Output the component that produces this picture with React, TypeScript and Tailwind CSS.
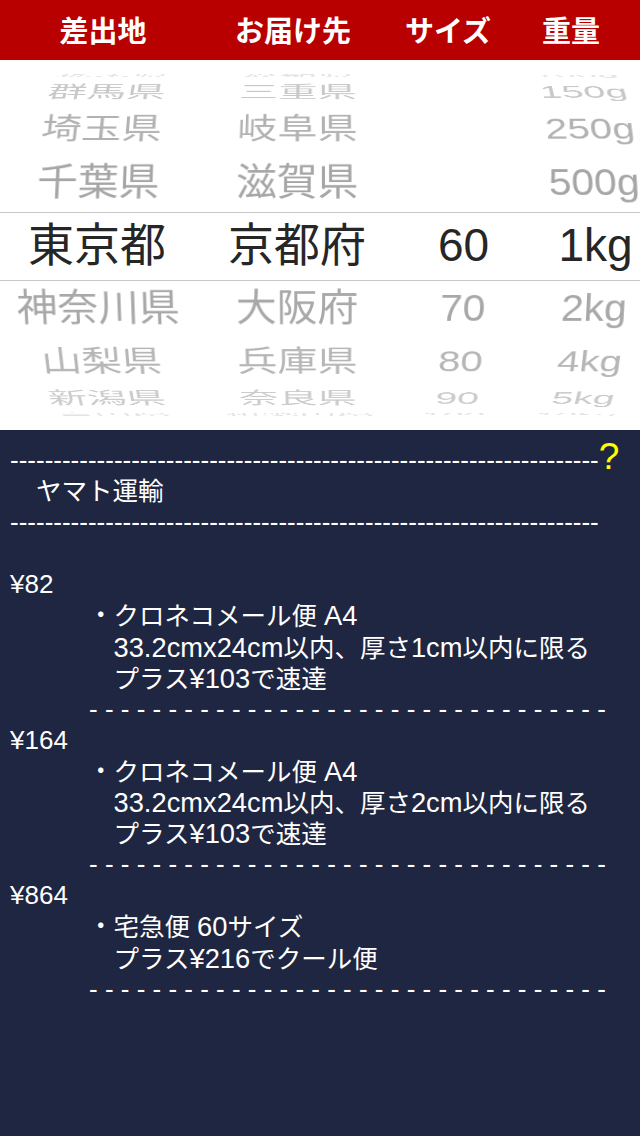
const origins = ['栃木県', '群馬県', '埼玉県', '千葉県', '東京都', '神奈川県', '山梨県', '新潟県', '富山県'];
const dests = ['愛知県', '三重県', '岐阜県', '滋賀県', '京都府', '大阪府', '兵庫県', '奈良県', '和歌山県'];
const sizes = ['', '', '', '', '60', '70', '80', '90', '100'];
const weights = ['100g', '150g', '250g', '500g', '1kg', '2kg', '4kg', '5kg', '10kg'];

// one entry per visible wheel row, from top to bottom (20deg per step)
const rowStyles = [
  'rotate-x-[80deg] text-[#e4e4e4] text-[41px]',
  'rotate-x-[60deg] text-[#c8c8c8] text-[41px]',
  'rotate-x-[40deg] text-[#b2b2b2] text-[41px]',
  'rotate-x-[20deg] text-[#a6a6a6] text-[41px]',
  'text-[#262626] text-[46px]',
  'rotate-x-[-20deg] text-[#a8a8a8] text-[41px]',
  'rotate-x-[-40deg] text-[#b6b6b6] text-[41px]',
  'rotate-x-[-60deg] text-[#cccccc] text-[41px]',
  'rotate-x-[-80deg] text-[#e4e4e4] text-[41px]',
];

const dashes = '-'.repeat(68);
const spacedDashes = '- '.repeat(32) + '-';

const quotes = [
  {
    price: '¥82',
    lines: ['クロネコメール便 A4', '33.2cmx24cm以内、厚さ1cm以内に限る', 'プラス¥103で速達'],
  },
  {
    price: '¥164',
    lines: ['クロネコメール便 A4', '33.2cmx24cm以内、厚さ2cm以内に限る', 'プラス¥103で速達'],
  },
  {
    price: '¥864',
    lines: ['宅急便 60サイズ', 'プラス¥216でクール便'],
  },
];

// latin runs are set a touch larger than the kana/kanji, like the original font
function Mixed({ text }: { text: string }) {
  const parts = text.split(/([0-9A-Za-z.¥]+)/);
  return (
    <>
      {parts.map((p, i) =>
        /^[0-9A-Za-z.¥]+$/.test(p) ? (
          <span key={i} className="text-[27.3px]">
            {p}
          </span>
        ) : (
          <span key={i}>{p}</span>
        )
      )}
    </>
  );
}

function Header() {
  return (
    <div className="h-[60px] shrink-0 bg-[#b90000] grid grid-cols-[206px_174px_136px_110px] items-center text-white text-[29px] font-bold [font-family:'Noto_Sans_CJK_JP',sans-serif]">
      <div className="text-center">差出地</div>
      <div className="text-center">お届け先</div>
      <div className="text-center">サイズ</div>
      <div className="text-center">重量</div>
    </div>
  );
}

function Picker() {
  return (
    <div className="h-[370px] shrink-0 bg-white overflow-hidden grid grid-rows-1 items-center perspective-[2000px] [font-family:'Liberation_Sans','Noto_Sans_CJK_JP',sans-serif]">
      {/* selection lines */}
      <div className="col-start-1 row-start-1 h-[69px] mt-[2px] w-full border-y border-[#c8c8c8]" />
      {rowStyles.map((cls, i) => (
        <div
          key={i}
          className={`col-start-1 row-start-1 h-[56px] leading-[56px] w-full grid grid-cols-[194px_206px_127px_1fr] items-center origin-[50%_50%_-185px] whitespace-nowrap ${cls}`}
        >
          <div className="text-center">{origins[i]}</div>
          <div className="text-center">{dests[i]}</div>
          <div className="text-center">{sizes[i]}</div>
          <div className="text-center pl-[23px]">{weights[i]}</div>
        </div>
      ))}
    </div>
  );
}

function Results() {
  return (
    <div className="flex-1 bg-[#1f2641] text-white pt-[15px] text-[25.5px] leading-[31.1px] [font-family:'Liberation_Sans','Noto_Sans_CJK_JP',sans-serif] whitespace-nowrap">
      <div className="flex items-baseline pl-[10px] h-[31.1px]">
        <span className="[font-family:'Liberation_Sans',sans-serif] text-[26px]">{dashes}</span>
        <span className="text-[#ffff00] text-[37px] leading-[24px]">?</span>
      </div>
      <div className="pl-[36px] h-[31.1px]">ヤマト運輸</div>
      <div className="pl-[10px] h-[31.1px] [font-family:'Liberation_Sans',sans-serif] text-[26px]">{dashes}</div>
      <div className="h-[31.1px]" />

      {quotes.map((q) => (
        <div key={q.price}>
          <div className="pl-[10px] h-[31.1px] text-[26px]">{q.price}</div>
          <div className="flex pl-[88px]">
            <span className="w-[25.5px] shrink-0">・</span>
            <div>
              {q.lines.map((l) => (
                <div key={l} className="h-[31.1px]">
                  <Mixed text={l} />
                </div>
              ))}
            </div>
          </div>
          <div className="pl-[89px] h-[31.1px] [font-family:'Liberation_Sans',sans-serif] text-[26px]">
            {spacedDashes}
          </div>
        </div>
      ))}
    </div>
  );
}

export default function App() {
  return (
    <div className="w-[640px] h-[1136px] flex flex-col overflow-hidden">
      <Header />
      <Picker />
      <Results />
    </div>
  );
}
